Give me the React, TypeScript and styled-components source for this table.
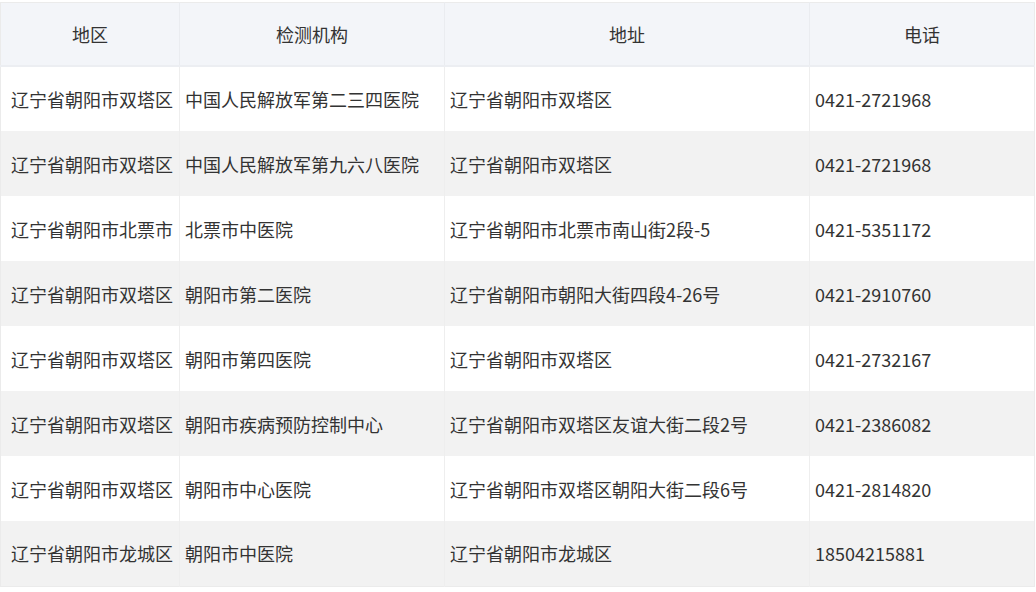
import React from 'react'
import styled, { createGlobalStyle } from 'styled-components'

const GlobalStyle = createGlobalStyle`
  body {
    margin: 0;
    background: #fff;
    font-family: "Microsoft YaHei", "Noto Sans CJK SC", "Noto Sans", sans-serif;
  }
`

const Wrapper = styled.div`
  padding-top: 2px;
  width: 1034px;
`

const Table = styled.table`
  width: 1034px;
  border-collapse: collapse;
  table-layout: fixed;
  border: 1px solid #ebebeb;
  font-size: 18px;
  color: #333;
`

const HeadCell = styled.th`
  height: 62px;
  padding: 0;
  background: #f3f5f9;
  font-weight: normal;
  text-align: center;
  color: #333;
  border-left: 1px solid #eaecf0;
  border-bottom: 2px solid #eceef2;
  &:first-child {
    border-left: none;
  }
`

const Row = styled.tr<{ $striped: boolean }>`
  height: 65px;
  background: ${p => (p.$striped ? '#f2f2f2' : '#fff')};
`

const Cell = styled.td`
  padding: 0 0 0 5px;
  white-space: nowrap;
  overflow: hidden;
  border-left: 1px solid #eeeeee;
  &:first-child {
    border-left: none;
    padding-left: 10px;
  }
`

const columns = [
  { title: '地区', width: 179 },
  { title: '检测机构', width: 265 },
  { title: '地址', width: 365 },
  { title: '电话', width: 225 }
]

const rows = [
  ['辽宁省朝阳市双塔区', '中国人民解放军第二三四医院', '辽宁省朝阳市双塔区', '0421-2721968'],
  ['辽宁省朝阳市双塔区', '中国人民解放军第九六八医院', '辽宁省朝阳市双塔区', '0421-2721968'],
  ['辽宁省朝阳市北票市', '北票市中医院', '辽宁省朝阳市北票市南山街2段-5', '0421-5351172'],
  ['辽宁省朝阳市双塔区', '朝阳市第二医院', '辽宁省朝阳市朝阳大街四段4-26号', '0421-2910760'],
  ['辽宁省朝阳市双塔区', '朝阳市第四医院', '辽宁省朝阳市双塔区', '0421-2732167'],
  ['辽宁省朝阳市双塔区', '朝阳市疾病预防控制中心', '辽宁省朝阳市双塔区友谊大街二段2号', '0421-2386082'],
  ['辽宁省朝阳市双塔区', '朝阳市中心医院', '辽宁省朝阳市双塔区朝阳大街二段6号', '0421-2814820'],
  ['辽宁省朝阳市龙城区', '朝阳市中医院', '辽宁省朝阳市龙城区', '18504215881']
]

export default function App() {
  return (
    <>
      <GlobalStyle />
      <Wrapper>
        <Table>
          <colgroup>
            {columns.map(c => (
              <col key={c.title} style={{ width: c.width }} />
            ))}
          </colgroup>
          <thead>
            <tr>
              {columns.map(c => (
                <HeadCell key={c.title}>{c.title}</HeadCell>
              ))}
            </tr>
          </thead>
          <tbody>
            {rows.map((r, i) => (
              <Row key={i} $striped={i % 2 === 1}>
                {r.map((v, j) => (
                  <Cell key={j}>{v}</Cell>
                ))}
              </Row>
            ))}
          </tbody>
        </Table>
      </Wrapper>
    </>
  )
}
